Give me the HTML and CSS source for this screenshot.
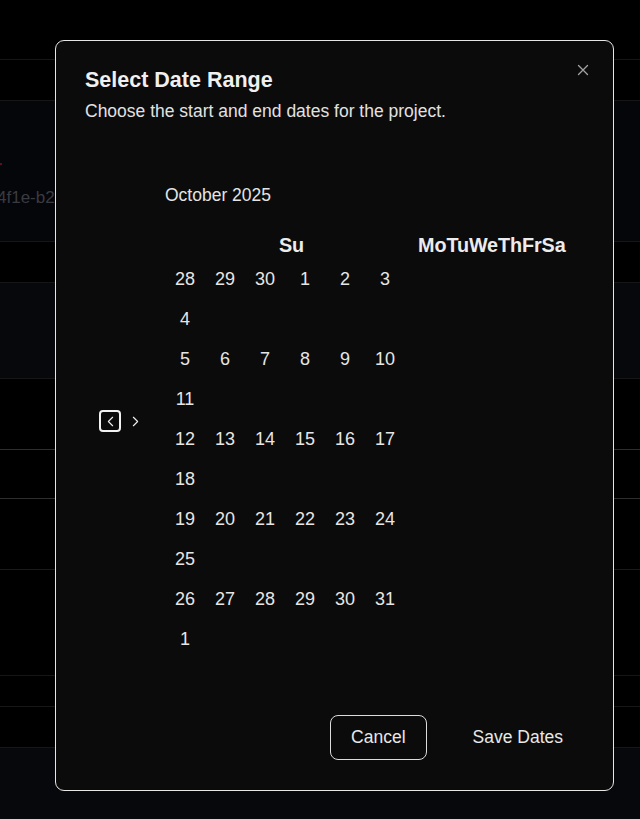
FILE: index.html
```html
<!DOCTYPE html>
<html lang="en">
<head>
<meta charset="utf-8">
<title>Select Date Range</title>
<link rel="stylesheet" href="styles.css">
</head>
<body>
<div class="page">
  <div class="row r-top"></div>
  <div class="row r-b1"></div>
  <div class="row r-navy"><span class="id-text">4f1e-b2c7-9a1d</span><span class="red-dot"></span></div>
  <div class="row r-b2"></div>
  <div class="row r-navy2"></div>
  <div class="row r-b3"></div>
  <div class="row r-b4"></div>
  <div class="row r-b5"></div>
  <div class="row r-b6"></div>
  <div class="row r-b7"></div>
  <div class="row r-b8"></div>
  <div class="row r-foot"></div>
</div>

<div class="dialog" role="dialog">
  <button class="close" aria-label="Close">
    <svg viewBox="0 0 24 24" width="18" height="18"><path d="M18 6 6 18M6 6l12 12"/></svg>
  </button>
  <div class="header">
    <h2 class="title">Select Date Range</h2>
    <p class="desc">Choose the start and end dates for the project.</p>
  </div>

  <div class="calendar">
    <div class="nav">
      <button class="nav-btn focused" aria-label="Previous month">
        <svg viewBox="0 0 24 24" width="17" height="17"><path d="m15 18-6-6 6-6"/></svg>
      </button>
      <button class="nav-btn" aria-label="Next month">
        <svg viewBox="0 0 24 24" width="17" height="17"><path d="m9 18 6-6-6-6"/></svg>
      </button>
    </div>
    <div class="month">
      <div class="caption">October 2025</div>
      <div class="weekdays"><span class="wd-first">Su</span><span>Mo</span><span>Tu</span><span>We</span><span>Th</span><span>Fr</span><span>Sa</span></div>
      <div class="week"><span>28</span><span>29</span><span>30</span><span>1</span><span>2</span><span>3</span><span>4</span></div>
      <div class="week"><span>5</span><span>6</span><span>7</span><span>8</span><span>9</span><span>10</span><span>11</span></div>
      <div class="week"><span>12</span><span>13</span><span>14</span><span>15</span><span>16</span><span>17</span><span>18</span></div>
      <div class="week"><span>19</span><span>20</span><span>21</span><span>22</span><span>23</span><span>24</span><span>25</span></div>
      <div class="week"><span>26</span><span>27</span><span>28</span><span>29</span><span>30</span><span>31</span><span>1</span></div>
    </div>
  </div>

  <div class="footer">
    <button class="btn btn-outline">Cancel</button>
    <button class="btn btn-ghost">Save Dates</button>
  </div>
</div>
</body>
</html>
```

FILE: styles.css
```css
* { box-sizing: border-box; }
html, body { margin: 0; padding: 0; }
body {
  width: 640px;
  height: 819px;
  overflow: hidden;
  background: #000;
  font-family: "Liberation Sans", Arial, sans-serif;
  position: relative;
}
.page { display: flex; flex-direction: column; }
.row { border-bottom: 1px solid #161616; }
.r-top { height: 60px; background: #000; }
.r-b1 { height: 41px; background: #000; }
.r-navy {
  height: 141px;
  background: #05060a;
  position: relative;
  display: flex;
  align-items: flex-start;
  padding-top: 87px;
}
.id-text { color: #3a3b40; font-size: 17px; line-height: 20px; margin-left: -3px; white-space: nowrap; }
.red-dot { position: absolute; left: 0; top: 62px; width: 2px; height: 2px; background: #5a1020; }
.r-b2 { height: 41px; background: #000; }
.r-navy2 { height: 96px; background: #07080c; }
.r-b3 { height: 71px; background: #000; border-bottom-color: #2e2e2e; }
.r-b4 { height: 49px; background: #000; border-bottom-color: #2e2e2e; }
.r-b5 { height: 71px; background: #000; border-bottom-color: #1a1a1a; }
.r-b6 { height: 106px; background: #000; }
.r-b7 { height: 31px; background: #000; }
.r-b8 { height: 41px; background: #000; }
.r-foot { height: 80px; background: #07080c; border-bottom: 0; }

.dialog {
  position: absolute;
  left: 55px;
  top: 40px;
  width: 559px;
  height: 751px;
  background: #0b0b0b;
  border: 1px solid #e6e6e6;
  border-radius: 9px;
  padding: 27px 29px 30px 29px;
  display: flex;
  flex-direction: column;
  color: #ececec;
}
.close {
  position: absolute;
  right: 20px;
  top: 19px;
  width: 20px;
  height: 20px;
  padding: 0;
  background: none;
  border: 0;
  display: flex;
  align-items: center;
  justify-content: center;
}
.close svg { fill: none; stroke: #a3a3a3; stroke-width: 1.7; stroke-linecap: round; }

.header { display: flex; flex-direction: column; gap: 7px; }
.title {
  margin: 0;
  font-size: 21.5px;
  line-height: 24px;
  font-weight: 700;
  color: #f0f0f0;
}
.desc {
  margin: 0;
  font-size: 17.5px;
  line-height: 24px;
  color: #e2e2e2;
}

.calendar {
  flex: 1;
  display: flex;
  align-items: center;
  padding-left: 14px;
  padding-top: 4px;
}
.nav { display: flex; align-items: center; gap: 3px; margin-right: 19px; }
.nav-btn {
  width: 22px;
  height: 22px;
  padding: 0;
  background: none;
  border: 2px solid transparent;
  border-radius: 4px;
  display: flex;
  align-items: center;
  justify-content: center;
}
.nav-btn.focused { border-color: #f2f2f2; }
.nav-btn svg { fill: none; stroke: #efefef; stroke-width: 1.6; stroke-linecap: round; stroke-linejoin: round; flex: none; }

.month { display: flex; flex-direction: column; }
.caption {
  font-size: 17.5px;
  line-height: 24px;
  color: #e4e4e4;
  margin-bottom: 25px;
}
.weekdays {
  display: flex;
  align-items: center;
  height: 27px;
  font-size: 19.8px;
  font-weight: 700;
  color: #ececec;
  letter-spacing: -0.1px;
}
.wd-first { width: 253px; text-align: center; }
.week { display: flex; flex-wrap: wrap; width: 240px; }
.week span {
  width: 40px;
  height: 40px;
  display: flex;
  align-items: center;
  justify-content: center;
  font-size: 18px;
  color: #e6e6e6;
}

.footer { display: flex; justify-content: flex-end; gap: 25px; }
.btn {
  height: 45px;
  padding: 0 20px;
  font-family: inherit;
  font-size: 17.5px;
  color: #e8e8e8;
  background: transparent;
  border: 1px solid transparent;
  border-radius: 8px;
}
.btn-outline { border-color: #dcdcdc; }
```
